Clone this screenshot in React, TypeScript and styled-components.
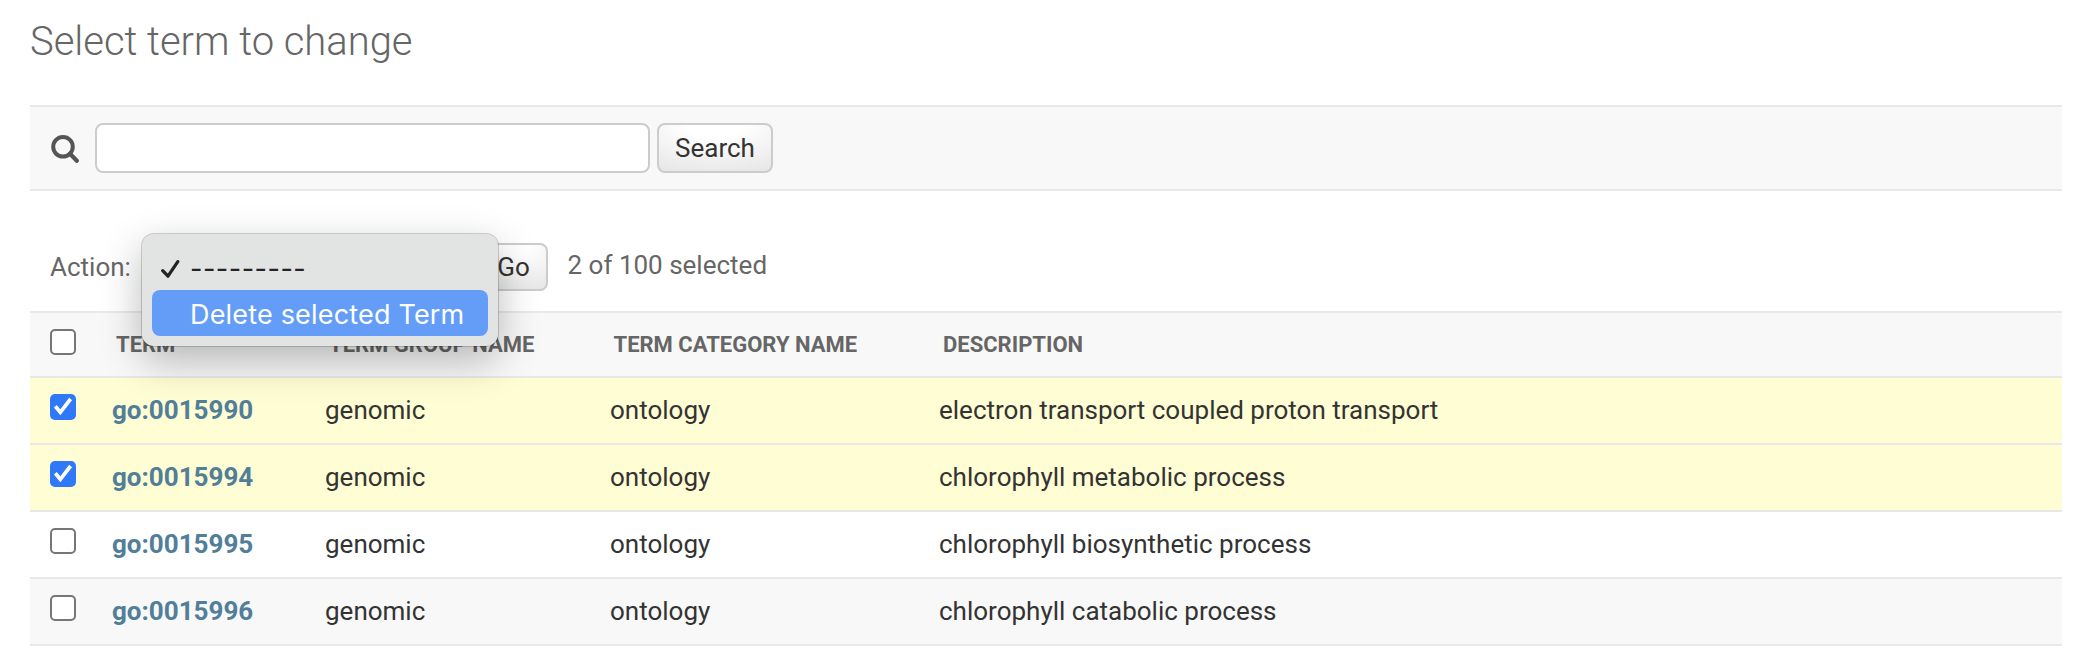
import React from "react";
import styled, { createGlobalStyle } from "styled-components";

const GlobalStyle = createGlobalStyle`
  *, *::before, *::after { box-sizing: border-box; }
  body {
    margin: 0;
    background: #fff;
    color: #333;
    font-family: Roboto, "Liberation Sans", sans-serif;
    font-size: 26px;
    line-height: 30px;
  }
`;

const Page = styled.main`
  height: 654px;
  padding: 19px 32px 0 30px;
  overflow: hidden;
`;

const Title = styled.h1`
  height: 48px;
  margin: 0 0 38px;
  font-size: 40px;
  font-weight: 300;
  line-height: 46px;
  letter-spacing: -0.03px;
  color: #666;
`;

const SearchBar = styled.form`
  display: flex;
  align-items: center;
  height: 86px;
  padding: 0 20px;
  background: #f8f8f8;
  border-top: 2px solid #e8e8e8;
  border-bottom: 2px solid #e8e8e8;
`;

const SearchIcon = styled.svg`
  width: 30px;
  height: 30px;
  margin-right: 15px;
`;

const SearchInput = styled.input`
  width: 555px;
  height: 50px;
  margin: 0 7px 0 0;
  padding: 0 10px;
  font: inherit;
  background: #fff;
  border: 2px solid #ccc;
  border-radius: 8px;
  outline: 0;
`;

const Button = styled.button<{ $width: number; $height: number }>`
  width: ${(p) => p.$width}px;
  height: ${(p) => p.$height}px;
  padding: 0;
  font: inherit;
  line-height: 30px;
  color: #333;
  text-align: center;
  background: radial-gradient(ellipse 120% 130% at 50% 0, #fff 20%, #ddd 110%);
  border: 2px solid #ccc;
  border-radius: 8px;
`;

const GoButton = styled(Button)`
  padding-right: 3px;
`;

const Actions = styled.div`
  position: relative;
  display: flex;
  height: 120px;
  padding: 52px 20px 0;
  color: #666;
`;

const ActionLabel = styled.label`
  width: 92px;
  padding-top: 9px;
`;

const ActionSlot = styled.div`
  width: 340px;
`;

const Counter = styled.span`
  margin-left: 19.5px;
  padding-top: 7px;
`;

const Menu = styled.ul`
  position: absolute;
  z-index: 2;
  top: 43px;
  left: 112px;
  width: 356px;
  height: 112px;
  margin: 0;
  padding: 10px 10px;
  list-style: none;
  font-family: Inter, "Liberation Sans", sans-serif;
  font-size: 27px;
  background: #e2e4e3;
  border-radius: 12px;
  box-shadow: 0 0 0 1px rgba(0, 0, 0, 0.17), 0 14px 40px rgba(0, 0, 0, 0.28);
`;

const MenuItem = styled.li<{ $active?: boolean }>`
  display: flex;
  align-items: center;
  height: 46px;
  padding: 4px 0 0 8px;
  color: ${(p) => (p.$active ? "#fff" : "#232323")};
  background: ${(p) => (p.$active ? "#639df8" : "transparent")};
  border-radius: 8px;
  white-space: nowrap;
`;

const MenuMark = styled.span`
  display: flex;
  width: 30px;
`;

const MenuText = styled.span<{ $spacing: number }>`
  letter-spacing: ${(p) => p.$spacing}px;
`;

const Row = styled.div<{ $tone: string }>`
  display: grid;
  grid-template-columns: 81px 214px 285px 329px 1fr;
  height: 67px;
  padding: 16px 0 0;
  background: ${(p) => p.$tone};
  border-bottom: 2px solid #e8e8e8;
`;

const Table = styled.section`
  border-top: 2px solid #e8e8e8;
  & > ${Row}:first-child { height: 65px; }
`;

const CheckCell = styled.div`
  padding-left: 20px;
`;

const Checkbox = styled.span<{ $checked?: boolean }>`
  display: flex;
  width: 26px;
  height: 26px;
  background: ${(p) => (p.$checked ? "#2f78f7" : "#fff")};
  border: ${(p) => (p.$checked ? "0" : "2px solid #767676")};
  border-radius: 5px;
`;

const HeadCell = styled.div<{ $inset: number }>`
  padding-left: ${(p) => p.$inset}px;
  font-size: 22px;
  font-weight: 700;
  line-height: 31px;
  color: #666;
  text-transform: uppercase;
  white-space: nowrap;
`;

const Cell = styled.div`
  padding-top: 1px;
  white-space: nowrap;
`;

const TermLink = styled.a`
  margin-left: 1px;
  font-weight: 700;
  color: #517e99;
`;

function Check({ checked }: { checked?: boolean }) {
  return (
    <Checkbox $checked={checked} role="checkbox" aria-checked={!!checked}>
      {checked && (
        <svg width="26" height="26" viewBox="0 0 26 26" fill="none">
          <path d="M5.3 12.3 10.3 18.3 20.6 5" stroke="#fff" strokeWidth="3.7" />
        </svg>
      )}
    </Checkbox>
  );
}

const terms = [
  { id: "go:0015990", description: "electron transport coupled proton transport", checked: true },
  { id: "go:0015994", description: "chlorophyll metabolic process", checked: true },
  { id: "go:0015995", description: "chlorophyll biosynthetic process", checked: false },
  { id: "go:0015996", description: "chlorophyll catabolic process", checked: false },
];

export default function App() {
  return (
    <Page>
      <GlobalStyle />
      <Title>Select term to change</Title>
      <SearchBar>
        <SearchIcon viewBox="0 0 30 30" fill="none" stroke="#555">
          <circle cx="13" cy="13.8" r="9.8" strokeWidth="4" />
          <path d="m20 20.8 6.8 7" strokeWidth="4.2" strokeLinecap="round" />
        </SearchIcon>
        <SearchInput aria-label="Search" />
        <Button type="button" $width={116} $height={50}>Search</Button>
      </SearchBar>
      <Actions>
        <ActionLabel>Action:</ActionLabel>
        <ActionSlot />
        <GoButton type="button" $width={66} $height={48}>Go</GoButton>
        <Counter>2 of 100 selected</Counter>
        <Menu>
          <MenuItem>
            <MenuMark>
              <svg width="20" height="20" viewBox="0 0 20 20" fill="none">
                <path d="M2.7 11.6 8 17.2 17.8 2.6" stroke="#232323" strokeWidth="3.2" strokeLinecap="round" strokeLinejoin="round" />
              </svg>
            </MenuMark>
            <MenuText $spacing={0.5}>---------</MenuText>
          </MenuItem>
          <MenuItem $active>
            <MenuMark />
            <MenuText $spacing={0.18}>Delete selected Term</MenuText>
          </MenuItem>
        </Menu>
      </Actions>
      <Table>
        <Row $tone="#f8f8f8">
          <CheckCell><Check /></CheckCell>
          <HeadCell $inset={5}>Term</HeadCell>
          <HeadCell $inset={4}>Term group name</HeadCell>
          <HeadCell $inset={3.5}>Term category name</HeadCell>
          <HeadCell $inset={4}>Description</HeadCell>
        </Row>
        {terms.map((term, i) => (
          <Row key={term.id} $tone={term.checked ? "#fffdd3" : i % 2 ? "#f8f8f8" : "#fff"}>
            <CheckCell><Check checked={term.checked} /></CheckCell>
            <Cell><TermLink>{term.id}</TermLink></Cell>
            <Cell>genomic</Cell>
            <Cell>ontology</Cell>
            <Cell>{term.description}</Cell>
          </Row>
        ))}
      </Table>
    </Page>
  );
}
